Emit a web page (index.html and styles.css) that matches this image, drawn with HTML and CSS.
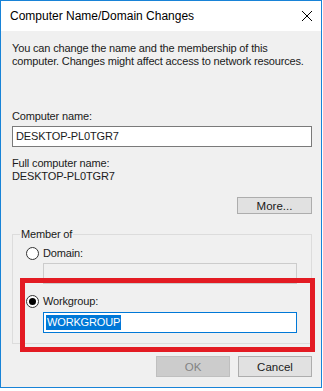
FILE: index.html
```html
<!DOCTYPE html>
<html>
<head>
    <title>Computer Name/Domain Changes</title>
    <link rel="stylesheet" href="styles.css">
</head>
<body>
    <div class="window">
        <div class="titlebar">
            <span class="title">Computer Name/Domain Changes</span>
            <svg class="close" width="12" height="12" viewBox="0 0 12 12">
                <path d="M1 1 L11 11 M11 1 L1 11" stroke="#000" stroke-width="1" fill="none"/>
            </svg>
        </div>
        <div class="content">
            <p class="desc">You can change the name and the membership of this<br>computer. Changes might affect access to network resources.</p>

            <div class="label top-gap">Computer name:</div>
            <div class="textbox">DESKTOP-PL0TGR7</div>

            <div class="label small-gap">Full computer name:</div>
            <div class="label">DESKTOP-PL0TGR7</div>

            <div class="more-row">
                <button class="button">More...</button>
            </div>

            <fieldset class="group">
                <legend>Member of</legend>
                <div class="radio-row first">
                    <span class="radio"></span>
                    <span>Domain:</span>
                </div>
                <div class="textbox sub disabled"></div>
                <div class="radio-row second">
                    <span class="radio checked"></span>
                    <span>Workgroup:</span>
                </div>
                <div class="textbox sub focused"><span class="selected">WORKGROUP</span></div>
            </fieldset>

            <div class="buttons">
                <button class="button disabled">OK</button>
                <button class="button">Cancel</button>
            </div>
        </div>
        <div class="highlight"></div>
    </div>
</body>
</html>
```

FILE: styles.css
```css
body {
    margin: 0;
    padding: 0;
    background-color: #ffffff;
    font-family: "Liberation Sans", Arial, sans-serif;
    font-size: 11px;
    letter-spacing: -0.15px;
    color: #1a1a1a;
}

.window {
    position: relative;
    width: 320px;
    border: 1px solid #1883d7;
    background-color: #f0f0f0;
}

.titlebar {
    height: 30px;
    background-color: #ffffff;
    display: flex;
    align-items: center;
    justify-content: space-between;
    padding: 0 8px 0 9px;
}

.title {
    font-size: 12px;
    letter-spacing: 0;
    line-height: 14px;
    color: #000000;
}

.content {
    padding: 11px 9px 10px 11px;
}

.desc {
    margin: 0;
    line-height: 13px;
    white-space: nowrap;
}

.label {
    line-height: 13px;
}

.top-gap {
    margin-top: 42px;
}

.small-gap {
    margin-top: 10px;
}

.textbox {
    box-sizing: border-box;
    height: 21px;
    margin-top: 3px;
    border: 1px solid #7a7a7a;
    background-color: #ffffff;
    padding: 3px 3px;
    line-height: 13px;
}

.textbox.sub {
    width: 254px;
    margin-left: 16px;
}

.textbox.disabled {
    border-color: #cccccc;
    background-color: #f0f0f0;
}

.textbox.focused {
    border-color: #0078d7;
    margin-top: 4px;
    padding: 2px 2px;
}

.selected {
    display: inline-block;
    background-color: #0078d7;
    color: #ffffff;
    padding: 1px 1px;
    line-height: 13px;
}

.more-row {
    display: flex;
    justify-content: flex-end;
    margin-top: 14px;
}

.button {
    box-sizing: border-box;
    width: 74px;
    height: 21px;
    border: 1px solid #adadad;
    background-color: #e1e1e1;
    font-family: "Liberation Sans", Arial, sans-serif;
    font-size: 11.5px;
    color: #1a1a1a;
    padding: 0;
}

.more-row .button {
    width: 75px;
    height: 17px;
}

.button.disabled {
    border-color: #bfbfbf;
    background-color: #cccccc;
    color: #838383;
}

.group {
    margin: 14px 0 0 0;
    padding: 0 14px 10px 14px;
    border: 1px solid #dcdcdc;
}

.group legend {
    padding: 0 1px;
    margin-left: -7px;
    line-height: 13px;
}

.radio-row {
    display: flex;
    align-items: center;
    height: 14px;
    margin-left: -1px;
}

.radio-row.first {
    margin-top: 5px;
}

.radio-row.second {
    margin-top: 10px;
}

.radio {
    box-sizing: border-box;
    width: 13px;
    height: 13px;
    border: 1px solid #333333;
    border-radius: 50%;
    background-color: #ffffff;
    margin-right: 4px;
    display: flex;
    align-items: center;
    justify-content: center;
}

.radio.checked::after {
    content: "";
    width: 7px;
    height: 7px;
    border-radius: 50%;
    background-color: #000000;
}

.buttons {
    display: flex;
    justify-content: flex-end;
    gap: 8px;
    margin-top: 12px;
}

.highlight {
    position: absolute;
    left: 19px;
    top: 277px;
    width: 285px;
    height: 64px;
    border: 5px solid #e31b23;
}
```
